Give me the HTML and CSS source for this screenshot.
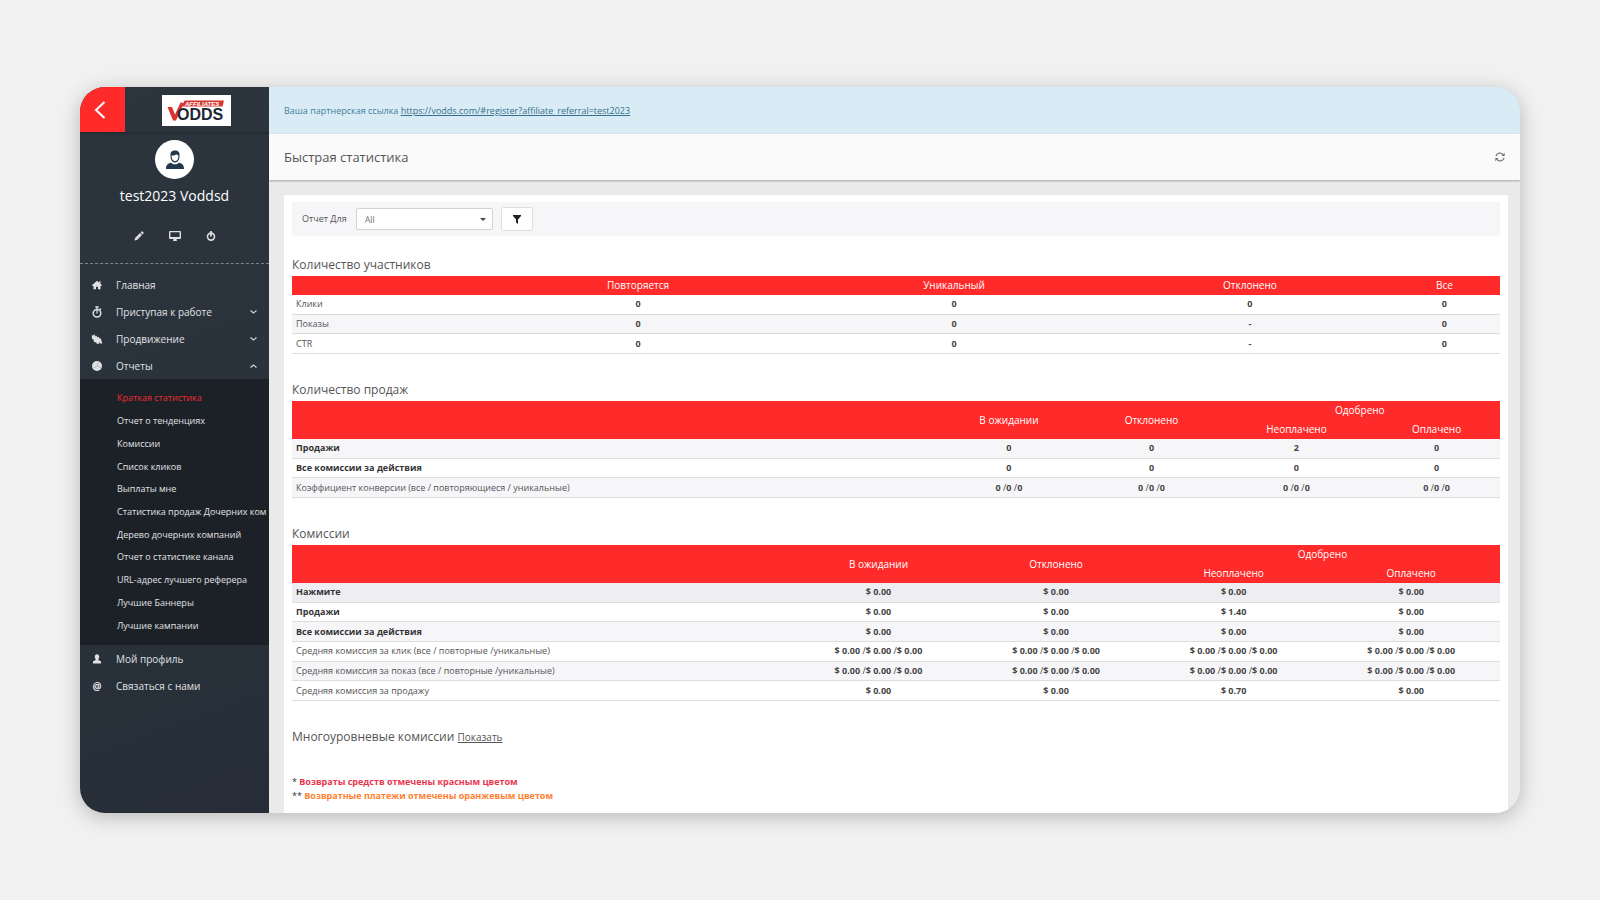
FILE: index.html
```html
<!DOCTYPE html>
<html lang="ru">
<head>
<meta charset="utf-8">
<title>Быстрая статистика</title>
<link rel="stylesheet" href="styles.css">
</head>
<body>
<div class="window">
  <aside class="sidebar">
    <div class="brand">
      <button class="back" type="button" aria-label="Назад">
        <svg width="12" height="20" viewBox="0 0 12 20"><path d="M10.500 2 2 10l8.500 8" fill="none" stroke="#fff" stroke-width="2"/></svg>
      </button>
      <a class="logo" href="#" aria-label="Vodds Affiliates">
        <svg width="69" height="31" viewBox="0 0 69 31">
          <path d="M22.500 5.500H62l-1.500 6H20z" fill="#d8342f"/>
          <text class="logo-small" x="23" y="11">AFFILIATES</text>
          <path d="M5.500 12H10l3 7.500 5.500-12 3.500.5-8 17.500h-3z" fill="#d8342f"/>
          <text class="logo-big" x="15" y="25">ODDS</text>
        </svg>
      </a>
    </div>
    <div class="profile">
      <div class="avatar">
        <svg width="18" height="20" viewBox="0 0 18 20"><path d="M4.500 6C4 2 6 .5 9 .5S14 2 13.500 6c0 4-2 6.500-4.500 6.500S4.500 10 4.500 6z" fill="#22384d"/><path d="M5.500 5.500c2 .2 4-.2 5-1.200.5.800 1 1.100 2 1.200 0 3.500-1.500 5.700-3.500 5.700S5.500 9 5.500 5.500z" fill="#fff"/><path d="M0 19c0-4 1.500-5.500 5.200-6.300 2 2 5.600 2 7.600 0C16.500 13.500 18 15 18 19z" fill="#22384d"/></svg>
      </div>
      <div class="username">test2023 Voddsd</div>
      <div class="actions">
        <button type="button" aria-label="Редактировать"><svg width="10" height="10" viewBox="0 0 10 10"><path d="M.5 9.500 1 7l5-5 2 2-5 5zM6.600 1.400 7.500.5q.5-.4 1 0l1 1q.4.5 0 1l-.9.9z" fill="#dcdee0"/></svg></button>
        <button type="button" aria-label="Экран"><svg width="12" height="10" viewBox="0 0 12 10"><path d="M1 0h10q1 0 1 1v6q0 1-1 1H7.500l.5 2H4l.5-2H1Q0 8 0 7V1q0-1 1-1zm.4 1.300v4.700h9.200V1.300z" fill="#dcdee0" fill-rule="evenodd"/></svg></button>
        <button type="button" aria-label="Выход"><svg width="10" height="10" viewBox="0 0 10 10"><circle cx="5" cy="5.600" r="3.500" fill="none" stroke="#dcdee0" stroke-width="1.600"/><path d="M5 0v5.500" stroke="#dcdee0" stroke-width="1.800"/></svg></button>
      </div>
    </div>
    <nav class="nav">
      <a class="item" href="#"><svg class="icon" width="10" height="10" viewBox="0 0 10 10"><path d="M5 .8 0 5.300l.6.700h.9v3.300H4V6.800h2v2.500h2.500V6h.9l.6-.7L8.500 4V1.300H7.200v1.500z" fill="#dfe1e3"/></svg>Главная</a>
      <a class="item" href="#"><svg class="icon" width="10" height="12" viewBox="0 0 10 12"><circle cx="5" cy="7.200" r="3.800" fill="none" stroke="#dfe1e3" stroke-width="1.500"/><path d="M3.300.3h3.400v1.500H3.300zM4.400 1h1.200v6.500H4.400zM8 2l1.500 1.500-1 .8L7.300 3z" fill="#dfe1e3"/></svg>Приступая к работе<svg class="chevron" width="7" height="4" viewBox="0 0 7 4"><path d="M.5.5l3 2.500 3-2.500" fill="none" stroke="#d0d3d6" stroke-width="1.200"/></svg></a>
      <a class="item" href="#"><svg class="icon" width="11" height="10" viewBox="0 0 11 10"><path d="M.3 1.200 2 1.500 2.500 0l1.800 2.600.8-1 .7 2 1.600-.9.6 1.800 1.300-.1L10.800 9.500H8.800L8 8l-.4 1.800H5.200L4.500 8l-1 .5L2 7l.2-1.500L.5 5z" fill="#dfe1e3"/></svg>Продвижение<svg class="chevron" width="7" height="4" viewBox="0 0 7 4"><path d="M.5.5l3 2.500 3-2.500" fill="none" stroke="#d0d3d6" stroke-width="1.200"/></svg></a>
      <a class="item" href="#"><svg class="icon" width="10" height="10" viewBox="0 0 10 10"><circle cx="5" cy="5" r="5" fill="#dfe1e3"/><path d="M5 5 6.500 1M5 5l4 1.800M5 5 1.500 7" stroke="#a4a9ad" stroke-width=".7"/></svg>Отчеты<svg class="chevron" width="7" height="4" viewBox="0 0 7 4"><path d="M.5 3.500l3-2.500 3 2.500" fill="none" stroke="#d0d3d6" stroke-width="1.200"/></svg></a>
      <div class="submenu">
        <a class="active" href="#">Краткая статистика</a>
        <a href="#">Отчет о тенденциях</a>
        <a href="#">Комиссии</a>
        <a href="#">Список кликов</a>
        <a href="#">Выплаты мне</a>
        <a href="#">Статистика продаж Дочерних ком</a>
        <a href="#">Дерево дочерних компаний</a>
        <a href="#">Отчет о статистике канала</a>
        <a href="#">URL-адрес лучшего реферера</a>
        <a href="#">Лучшие Баннеры</a>
        <a href="#">Лучшие кампании</a>
      </div>
      <a class="item" href="#"><svg class="icon" width="8" height="10" viewBox="0 0 8 10"><path d="M4 .2c1.500 0 2.200 1 2.200 2.300C6.200 4 5.600 5 5.200 5.400L6 6.500l2 .8V9.500H0V7.300l2-.8.8-1.100C2.400 5 1.800 4 1.800 2.500 1.800 1.200 2.500.2 4 .2z" fill="#dfe1e3"/></svg>Мой профиль</a>
      <a class="item" href="#"><span class="icon at">@</span>Связаться с нами</a>
    </nav>
  </aside>
  <main class="main">
    <div class="banner">Ваша партнерская ссылка <a href="#">https://vodds.com/#register?affiliate_referral=test2023</a></div>
    <header class="title">
      <h1>Быстрая статистика</h1>
      <button type="button" aria-label="Обновить"><svg width="10" height="10" viewBox="0 0 10 10"><path d="M1 4.200A4 4 0 0 1 8 2.600M9 5.800A4 4 0 0 1 2 7.400" fill="none" stroke="#777" stroke-width="1.300"/><path d="M9.700.7v3.400H6.300zM.3 9.300V5.900h3.400z" fill="#777"/></svg></button>
    </header>
    <div class="content">
      <section class="panel">
        <form class="filter">
          <label for="report">Отчет Для</label>
          <div class="select"><select id="report"><option>All</option></select></div>
          <button type="button" aria-label="Фильтр"><svg width="8" height="9" viewBox="0 0 8 9"><path d="M0 0h8v1L5 4.500V9L3 7.500v-3L0 1z" fill="#222"/></svg></button>
        </form>

        <h2 class="first">Количество участников</h2>
        <table class="visitors">
          <colgroup><col class="c-label"><col class="c-rep"><col class="c-uni"><col class="c-dec"><col></colgroup>
          <thead><tr><th></th><th>Повторяется</th><th>Уникальный</th><th>Отклонено</th><th>Все</th></tr></thead>
          <tbody>
            <tr><td>Клики</td><td>0</td><td>0</td><td>0</td><td>0</td></tr>
            <tr class="alt"><td>Показы</td><td>0</td><td>0</td><td>-</td><td>0</td></tr>
            <tr><td>CTR</td><td>0</td><td>0</td><td>-</td><td>0</td></tr>
          </tbody>
        </table>

        <h2>Количество продаж</h2>
        <table class="sales">
          <colgroup><col class="c-label"><col class="c-wait"><col class="c-dec"><col class="c-unpaid"><col></colgroup>
          <thead>
            <tr><th rowspan="2"></th><th rowspan="2">В ожидании</th><th rowspan="2">Отклонено</th><th colspan="2">Одобрено</th></tr>
            <tr><th>Неоплачено</th><th>Оплачено</th></tr>
          </thead>
          <tbody>
            <tr class="alt strong"><td>Продажи</td><td>0</td><td>0</td><td>2</td><td>0</td></tr>
            <tr class="strong"><td>Все комиссии за действия</td><td>0</td><td>0</td><td>0</td><td>0</td></tr>
            <tr class="alt"><td>Коэффициент конверсии (все / повторяющиеся / уникальные)</td><td>0 <i>/</i>0 <i>/</i>0</td><td>0 <i>/</i>0 <i>/</i>0</td><td>0 <i>/</i>0 <i>/</i>0</td><td>0 <i>/</i>0 <i>/</i>0</td></tr>
          </tbody>
        </table>

        <h2>Комиссии</h2>
        <table class="commissions">
          <colgroup><col class="c-label"><col><col><col><col></colgroup>
          <thead>
            <tr><th rowspan="2"></th><th rowspan="2">В ожидании</th><th rowspan="2">Отклонено</th><th colspan="2">Одобрено</th></tr>
            <tr><th>Неоплачено</th><th>Оплачено</th></tr>
          </thead>
          <tbody>
            <tr class="hover strong"><td>Нажмите</td><td>$ 0.00</td><td>$ 0.00</td><td>$ 0.00</td><td>$ 0.00</td></tr>
            <tr class="strong"><td>Продажи</td><td>$ 0.00</td><td>$ 0.00</td><td>$ 1.40</td><td>$ 0.00</td></tr>
            <tr class="alt strong"><td>Все комиссии за действия</td><td>$ 0.00</td><td>$ 0.00</td><td>$ 0.00</td><td>$ 0.00</td></tr>
            <tr><td>Средняя комиссия за клик (все / повторные /уникальные)</td><td>$ 0.00 <i>/</i>$ 0.00 <i>/</i>$ 0.00</td><td>$ 0.00 <i>/</i>$ 0.00 <i>/</i>$ 0.00</td><td>$ 0.00 <i>/</i>$ 0.00 <i>/</i>$ 0.00</td><td>$ 0.00 <i>/</i>$ 0.00 <i>/</i>$ 0.00</td></tr>
            <tr class="alt"><td>Средняя комиссия за показ (все / повторные /уникальные)</td><td>$ 0.00 <i>/</i>$ 0.00 <i>/</i>$ 0.00</td><td>$ 0.00 <i>/</i>$ 0.00 <i>/</i>$ 0.00</td><td>$ 0.00 <i>/</i>$ 0.00 <i>/</i>$ 0.00</td><td>$ 0.00 <i>/</i>$ 0.00 <i>/</i>$ 0.00</td></tr>
            <tr><td>Средняя комиссия за продажу</td><td>$ 0.00</td><td>$ 0.00</td><td>$ 0.70</td><td>$ 0.00</td></tr>
          </tbody>
        </table>

        <h2>Многоуровневые комиссии <a href="#">Показать</a></h2>
        <div class="notes">
          <p>* <strong class="refund">Возвраты средств отмечены красным цветом</strong></p>
          <p>** <strong class="chargeback">Возвратные платежи отмечены оранжевым цветом</strong></p>
        </div>
      </section>
    </div>
  </main>
</div>
</body>
</html>
```
FILE: styles.css
```css
* { box-sizing: border-box; }
body {
  margin: 0;
  min-height: 100vh;
  padding: 87px 80px;
  background: #f1f1f1;
  font: 10px/14px "Open Sans", "Noto Sans", sans-serif;
  color: #555;
}
button { border: 0; padding: 0; background: none; cursor: pointer; display: flex; align-items: center; justify-content: center; }
svg { display: block; }

.window {
  display: flex;
  min-height: 725px;
  border-radius: 25px;
  overflow: hidden;
  background: #eaeaea;
  box-shadow: 0 4px 20px rgba(0, 0, 0, .24);
}

.sidebar { flex: 0 0 189px; overflow: hidden; background: linear-gradient(160deg, #2c343e, #29323b 60%, #262d38); color: #e0e2e4; }
.sidebar a { color: inherit; text-decoration: none; }
.brand { display: flex; height: 46px; border-bottom: 1px solid #232a33; box-shadow: 0 1px 2px rgba(0, 0, 0, .2); }
.back { width: 45px; background: #ff2a2a; padding-right: 5px; }
.logo { margin: 8px 38px 0 auto; width: 69px; height: 31px; background: #fff; }
.logo-small { font: italic 700 6px "Liberation Sans", sans-serif; fill: #fff; }
.logo-big { font: 700 16px "Liberation Sans", sans-serif; fill: #1d2733; }

.profile { padding: 7px 0 19px; border-bottom: 1px dashed #7c848b; display: flex; flex-direction: column; align-items: center; }
.avatar { width: 39px; height: 39px; border-radius: 50%; background: #fff; display: flex; align-items: center; justify-content: center; }
.username { margin-top: 7px; font-size: 14px; line-height: 20px; color: #fff; }
.actions { display: flex; justify-content: center; margin-top: 22px; }
.actions button { width: 36px; height: 16px; }

.nav { padding-top: 7px; }
.item { display: flex; align-items: center; height: 27px; padding: 0 12px 0 11px; font-size: 10px; }
.icon { width: 12px; margin-right: 13px; flex: none; }
.at { text-align: center; font-weight: 700; }
.chevron { margin-left: auto; }
.submenu { display: grid; grid-auto-rows: 1fr; height: 266px; padding: 8px 0 8px 37px; background: #1c2127; font-size: 9px; }
.submenu a { display: flex; align-items: center; white-space: nowrap; }
.submenu .active { color: #f02b30; }

.main { flex: 1; min-width: 0; display: flex; flex-direction: column; }
.banner { padding: 16px 15px; line-height: 15px; background: #d9ecf5; color: #42809f; font-size: 9px; }
.banner a { color: #34708f; }
.title { display: flex; justify-content: space-between; align-items: center; height: 46px; padding: 0 15px; background: #fafafa; box-shadow: 0 1px 2px rgba(0, 0, 0, .3); }
.title h1 { margin: 0; font-size: 13px; font-weight: 400; }
.content { flex: 1; padding: 15px 12px 0 15px; display: flex; }
.panel { flex: 1; padding: 7px 8px 10px; background: #fff; border-radius: 2px 2px 0 0; }

.filter { display: flex; align-items: center; height: 34px; padding: 0 10px; background: #f6f6f8; font-size: 9px; border-radius: 2px; }
.select { position: relative; width: 137px; margin: 0 8px 0 9px; }
.select::after { content: ""; position: absolute; right: 7px; top: 10px; border: 3px solid transparent; border-top-color: #444; border-bottom: 0; }
.select select { appearance: none; width: 100%; height: 22px; padding: 0 8px; border: 1px solid #d4d4d4; border-radius: 2px; background: #fff; color: #777; font: 9px "Open Sans", sans-serif; }
.filter button { width: 32px; height: 24px; border: 1px solid #ddd; border-radius: 3px; background: #fff; }

h2 { margin: 27px 0 2px; font-size: 12px; line-height: 18px; font-weight: 400; }
h2.first { margin-top: 20px; }
h2 a { font-size: 10px; color: #555; }

table { width: 100%; table-layout: fixed; border-collapse: collapse; }
th, td { padding: 0 4px; text-align: center; }
th { background: #ff2a2a; color: #fff; font-size: 10px; line-height: 19px; font-weight: 400; }
td { border-bottom: 1px solid #ddd; font-size: 9px; line-height: 18px; font-weight: 700; color: #444; }
td:first-child { text-align: left; font-weight: 400; color: #555; }
td i { font-style: normal; font-weight: 400; }
.strong td:first-child { font-weight: 700; color: #333; }
.alt { background: #f6f6f9; }
.hover { background: #eeeef2; }

.visitors { height: 78px; }
.visitors .c-label { width: 15.5%; }
.visitors .c-rep { width: 26.3%; }
.visitors .c-uni { width: 26%; }
.visitors .c-dec { width: 23%; }
.sales { height: 97px; }
.sales .c-label { width: 53.2%; }
.sales .c-wait { width: 12.3%; }
.sales .c-dec { width: 11.3%; }
.sales .c-unpaid { width: 12.7%; }
.commissions { height: 156px; }
.commissions .c-label { width: 41.2%; }

.notes { margin-top: 29px; color: #333; font-size: 9px; }
.notes p { margin: 0; }
.refund { color: #e8364f; }
.chargeback { color: #ff7f32; }
```
